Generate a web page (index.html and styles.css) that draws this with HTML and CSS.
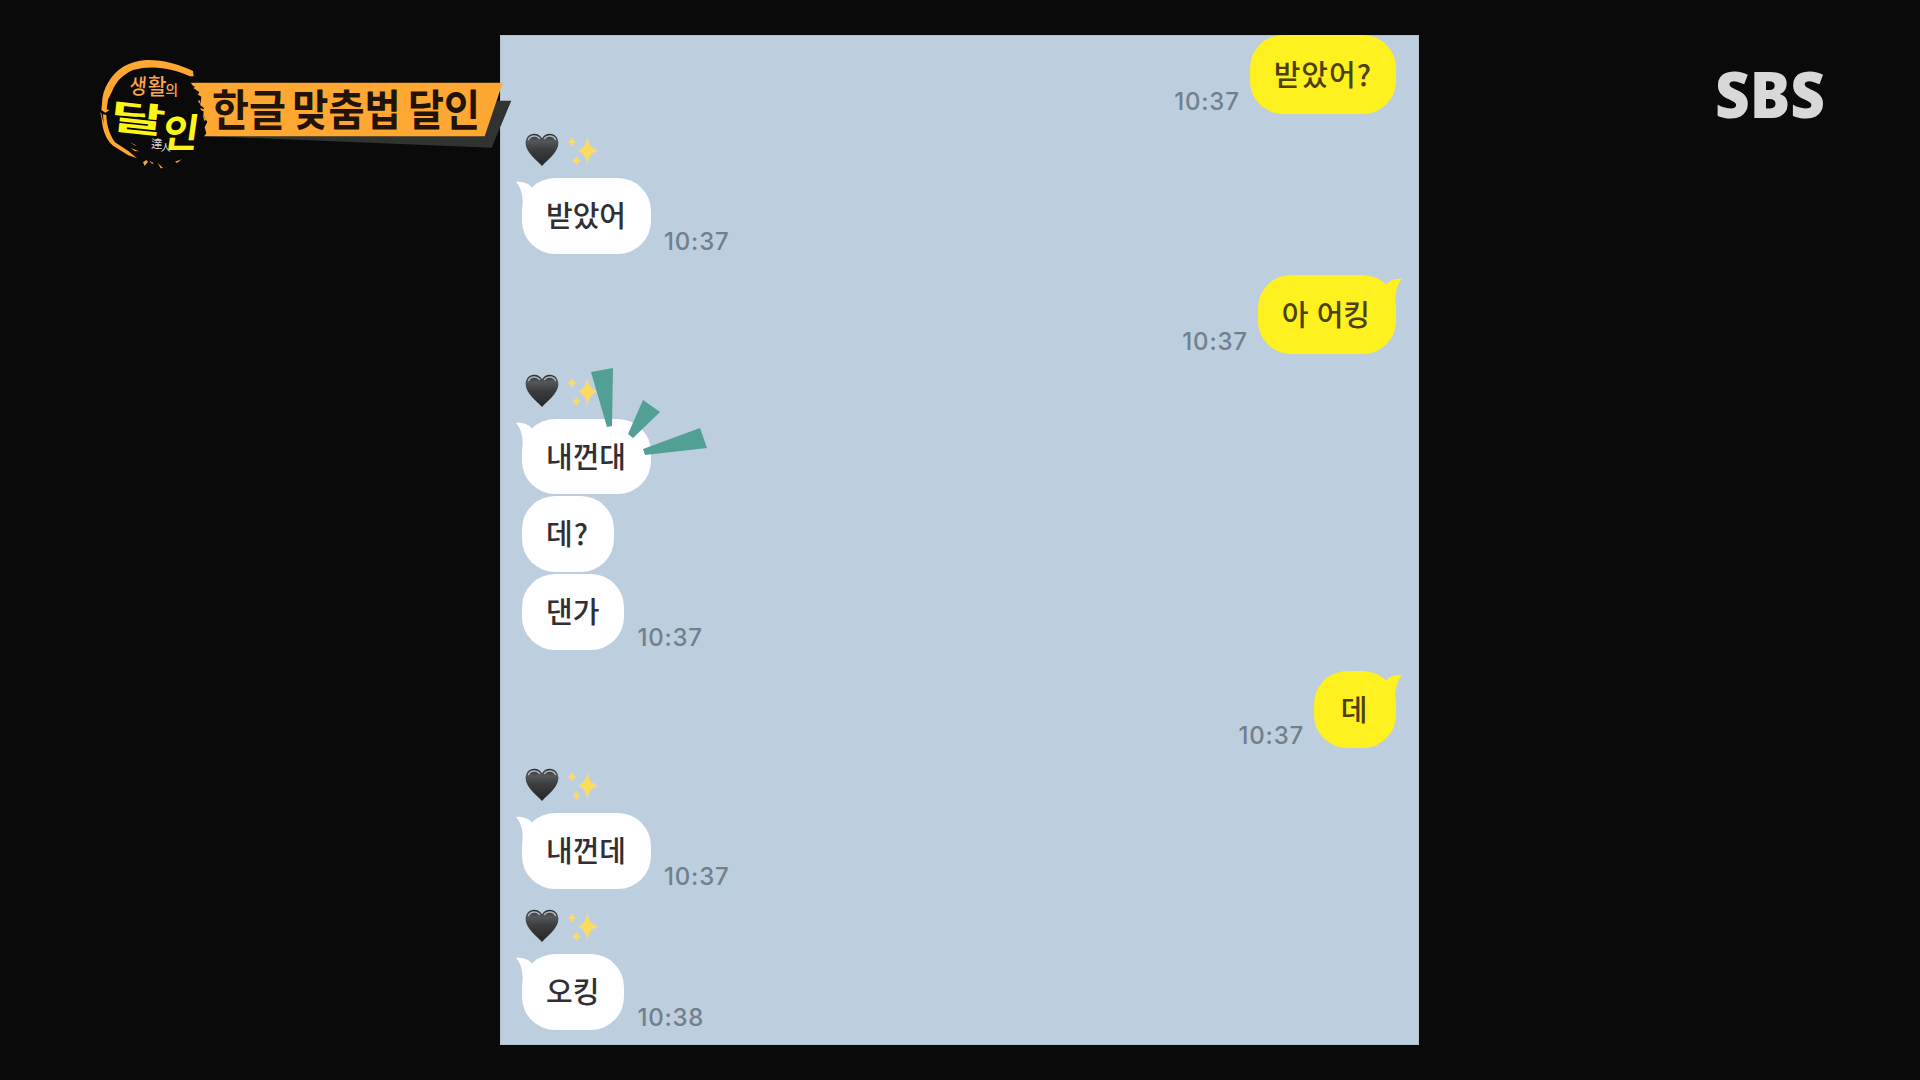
FILE: index.html
```
<!DOCTYPE html>
<html lang="ko">
<head>
    <meta charset="UTF-8">
    <meta name="viewport" content="width=device-width, initial-scale=1.0">
    <title>한글 맞춤법 달인</title>
    <link rel="stylesheet" href="styles.css">
</head>
<body>
    <!-- shared shapes -->
    <svg class="defs" width="0" height="0">
        <defs>
            <linearGradient id="heartFill" x1="0" y1="0" x2="0" y2="1">
                <stop offset="0" stop-color="#2b2d2f"/>
                <stop offset="0.22" stop-color="#55585b"/>
                <stop offset="0.5" stop-color="#3a3c3e"/>
                <stop offset="1" stop-color="#242627"/>
            </linearGradient>
            <symbol id="heart" viewBox="0 0 34 34">
                <path d="M17 33C13 28 1 20 .6 10.500C.4 4.500 4.500.8 9 .8c3.800 0 6.600 1.800 8 4.500C18.400 2.600 21.200.8 25 .8c4.500 0 8.600 3.700 8.400 9.700C33 20 21 28 17 33z" fill="url(#heartFill)"/>
                <path d="M3.500 6.500C5 2.600 11.500 1.500 14.500 5.500M19.500 5.500C22.500 1.500 29 2.600 30.500 6.500" fill="none" stroke="#aeb6bd" stroke-width="1.500" stroke-linecap="round"/>
            </symbol>
            <symbol id="sparkles" viewBox="0 0 32 30">
                <g fill="#fbdc5c" stroke="#efd795" stroke-width=".6">
                    <path d="M20.500 1.500Q21.500 12 30.500 14.500Q21.500 17 20.500 28Q18.500 17 11.500 14.500Q18.500 12 20.500 1.500z"/>
                    <path d="M5 1Q5.500 5 9 6Q5.500 7 5 11Q4 7 1 6Q4 5 5 1z"/>
                    <path d="M9.500 20Q10 23.500 13.500 24.500Q10 25.500 9.500 29Q8.500 25.500 5.500 24.500Q8.500 23.500 9.500 20z"/>
                </g>
            </symbol>
            <symbol id="tail" viewBox="0 0 24 30">
                <path d="M0 .8C7 0 12 2 16 6.500L24 14V30H6.500C7.500 17 6 8 0 .8z" fill="currentColor"/>
            </symbol>
        </defs>
    </svg>

    <main class="chat">
        <div class="row mine first">
            <span class="time">10:37</span>
            <div class="bubble question">받았어?</div>
        </div>

        <div class="name n1"><svg class="heart"><use href="#heart"/></svg><svg class="sparkles"><use href="#sparkles"/></svg></div>
        <div class="row">
            <div class="bubble"><svg class="tail"><use href="#tail"/></svg>받았어</div>
            <span class="time">10:37</span>
        </div>

        <div class="row mine second">
            <span class="time">10:37</span>
            <div class="bubble"><svg class="tail"><use href="#tail"/></svg>아 어킹</div>
        </div>

        <div class="name n2"><svg class="heart"><use href="#heart"/></svg><svg class="sparkles"><use href="#sparkles"/></svg></div>
        <div class="row short">
            <div class="bubble">
                <svg class="tail"><use href="#tail"/></svg>내껀대
                <svg class="burst" viewBox="0 0 116 88">
                    <path d="M0 4L22 0L21 58L16 59zM52 32L69 44L42 70L37 66zM109 60L116 80L54 87L52 81z" fill="#519f95"/>
                </svg>
            </div>
        </div>
        <div class="row next">
            <div class="bubble question">데?</div>
        </div>
        <div class="row next">
            <div class="bubble">댄가</div>
            <span class="time">10:37</span>
        </div>

        <div class="row mine third">
            <span class="time">10:37</span>
            <div class="bubble"><svg class="tail"><use href="#tail"/></svg>데</div>
        </div>

        <div class="name n3"><svg class="heart"><use href="#heart"/></svg><svg class="sparkles"><use href="#sparkles"/></svg></div>
        <div class="row">
            <div class="bubble"><svg class="tail"><use href="#tail"/></svg>내껀데</div>
            <span class="time">10:37</span>
        </div>

        <div class="name n4"><svg class="heart"><use href="#heart"/></svg><svg class="sparkles"><use href="#sparkles"/></svg></div>
        <div class="row">
            <div class="bubble"><svg class="tail"><use href="#tail"/></svg>오킹</div>
            <span class="time">10:38</span>
        </div>
    </main>

    <!-- programme title -->
    <svg class="title" viewBox="0 0 1320 420">
        <path d="M370 288L1235 323L1294 182H1240L1200 288z" fill="#30332f"/>
        <path d="M330 128H1268L1214 289H340z" fill="#fea732"/>
        <path d="M215 68L325 106L336 126L346 140L340 144L358 156L354 164L364 170L361 196L372 204L370 226L382 246L374 262L379 280L370 292L360 310L290 360L210 370L110 320L76 240L90 120z" fill="#0a0a0a"/>
        <g fill="#fea732">
            <path d="M339 93C300 74 250 59 199 60C144 63 107 89 84 128C72 147 66 169 66 191L64 210L76 218L88 211L80 208L84 179L97 152C109 124 128 104 159 90C220 73 280 86 330 109L341 109z"/>
            <path d="M61 217L65 236C67 268 78 299 99 317L145 346L171 355L145 333L105 307C89 284 80 257 79 225L69 223L71 251L64 220z"/>
            <path d="M150 306L170 317L163 316zM152 324L177 334L164 333zM189 367L199 360L204 365L194 378zM208 362L222 370L216 371zM233 369L249 384L242 385zM285 365L305 358L291 369zM332 128L344 130L350 140L340 139zM358 179L363 195L354 184zM360 205L373 208L374 215L364 211zM368 225L379 240L373 242z"/>
        </g>
        <g class="brush" fill="#fba548">
            <text transform="translate(147 161) skewX(-5)" font-size="64" textLength="51" lengthAdjust="spacingAndGlyphs">생</text>
            <text x="203" y="163" font-size="66" textLength="56" lengthAdjust="spacingAndGlyphs">활</text>
            <text x="256" y="164" font-size="42">의</text>
        </g>
        <g class="brush heavy" fill="#fdf516">
            <text transform="translate(88 265) skewY(6) skewX(-6)" font-size="104" textLength="164" lengthAdjust="spacingAndGlyphs">달</text>
            <text transform="translate(243 321) skewX(-8)" font-size="118" textLength="108" lengthAdjust="spacingAndGlyphs">인</text>
        </g>
        <g class="hanja" fill="#d8d8d8">
            <text x="213" y="324" font-size="34">達</text>
            <text x="242" y="332" font-size="30">人</text>
        </g>
        <g class="headline">
            <text x="396" y="259" textLength="222" lengthAdjust="spacingAndGlyphs">한글</text>
            <text x="637" y="259" textLength="325" lengthAdjust="spacingAndGlyphs">맞춤법</text>
            <text x="984" y="259" textLength="216" lengthAdjust="spacingAndGlyphs">달인</text>
        </g>
    </svg>

    <svg class="station" viewBox="0 0 120 110">
        <text x="4" y="76" textLength="110" lengthAdjust="spacingAndGlyphs">SBS</text>
    </svg>
</body>
</html>
```
FILE: styles.css
```
* {
    box-sizing: border-box;
}
body {
    margin: 0;
    width: 1920px;
    height: 1080px;
    padding: 35px 0 0 500px;
    overflow: hidden;
    background: #0a0a0a;
    font-family: "Noto Sans CJK KR", sans-serif;
}
.defs {
    position: absolute;
}
.chat {
    display: flex;
    flex-direction: column;
    width: 919px;
    height: 1010px;
    padding: 0 23px 0 22px;
    background: #bdcede;
    box-shadow: inset 0 0 0 1px #b3c1cd;
}

/* messages */
.row {
    display: flex;
    align-items: flex-end;
    gap: 13px;
    height: 76px;
}
.row.short {
    height: 75px;
}
.row.next {
    margin-top: 2px;
}
.mine {
    justify-content: flex-end;
    gap: 10px;
    height: 79px;
}
.second {
    margin-top: 21px;
}
.third {
    margin-top: 21px;
    height: 77px;
}
.bubble {
    position: relative;
    display: flex;
    align-items: center;
    justify-content: center;
    height: 100%;
    min-width: 82px;
    padding: 0 25px 3px 24px;
    border-radius: 33px;
    background: #fefdff;
    color: #303033;
    font-size: 29px;
    font-weight: 500;
    line-height: 1;
}
.mine .bubble {
    padding-right: 26px;
    background: #fff01f;
    color: #4b410b;
}
.mine .question {
    padding-right: 24px;
}
.question {
    letter-spacing: 1px;
}
.tail {
    position: absolute;
    top: 3px;
    left: -6px;
    width: 24px;
    height: 30px;
    color: #fefdff;
}
.mine .tail {
    left: auto;
    right: -6px;
    color: #fff01f;
    transform: scaleX(-1);
}
.time {
    height: 25px;
    font-family: Inter, sans-serif;
    font-size: 24px;
    font-weight: 500;
    line-height: 26px;
    letter-spacing: 0.8px;
    color: #71808b;
}
.burst {
    position: absolute;
    top: -51px;
    left: 69px;
    width: 116px;
    height: 88px;
}

/* sender name */
.name {
    display: flex;
    gap: 8px;
    height: 45px;
    padding-left: 3px;
}
.n1 { margin-top: 19px; }
.n2 { margin-top: 20px; }
.n3 { margin-top: 20px; }
.n4 { margin-top: 20px; }
.heart {
    width: 34px;
    height: 34px;
}
.sparkles {
    width: 32px;
    height: 30px;
    margin-top: 3px;
}

/* overlays */
.title {
    position: absolute;
    top: 40px;
    left: 80px;
    width: 440px;
    height: 140px;
}
.brush {
    font-weight: 500;
}
.heavy {
    font-weight: 700;
}
.hanja {
    font-family: "Noto Sans CJK TC", sans-serif;
}
.headline {
    font-size: 130px;
    font-weight: 700;
    fill: #221309;
}
.station {
    position: absolute;
    top: 42px;
    left: 1711px;
    width: 120px;
    height: 110px;
    fill: #d8d8d8;
    font-family: "Open Sans", sans-serif;
    font-size: 64px;
    font-weight: 800;
}
```
